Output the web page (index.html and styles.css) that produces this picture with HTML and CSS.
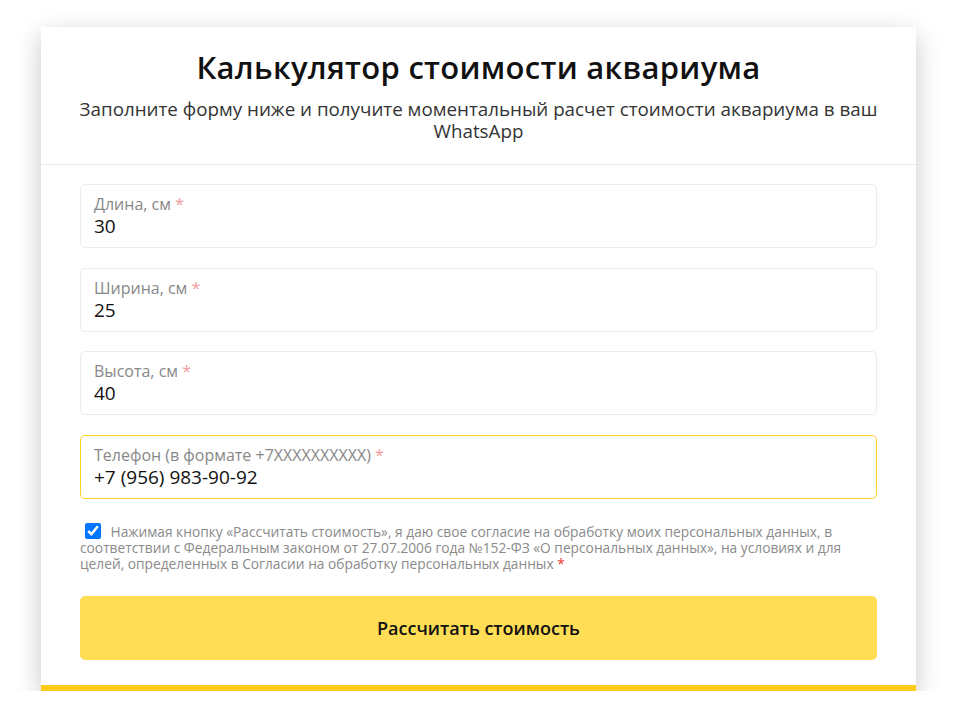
FILE: index.html
```html
<!DOCTYPE html>
<html lang="ru">

<head>
    <meta charset="UTF-8">
    <meta name="viewport" content="width=device-width, initial-scale=1.0">
    <title>Калькулятор стоимости аквариума</title>
    <link rel="stylesheet" href="styles.css">
</head>

<body>

    <div class="card">
        <!-- Шапка -->
        <div class="card-header">
            <h1>Калькулятор стоимости аквариума</h1>
            <p>Заполните форму ниже и получите моментальный расчет стоимости аквариума в ваш WhatsApp</p>
        </div>

        <!-- Форма -->
        <form class="card-body">
            <label class="field">
                <span class="field-label">Длина, см <span class="req">*</span></span>
                <input type="text" value="30">
            </label>

            <label class="field">
                <span class="field-label">Ширина, см <span class="req">*</span></span>
                <input type="text" value="25">
            </label>

            <label class="field">
                <span class="field-label">Высота, см <span class="req">*</span></span>
                <input type="text" value="40">
            </label>

            <label class="field field-active">
                <span class="field-label">Телефон (в формате +7XXXXXXXXXX) <span class="req">*</span></span>
                <input type="text" value="+7 (956) 983-90-92">
            </label>

            <div class="agree">
                <input type="checkbox" checked>
                Нажимая кнопку «Рассчитать стоимость», я даю свое согласие на обработку моих персональных данных, в
                соответствии с Федеральным законом от 27.07.2006 года №152-ФЗ «О персональных данных», на условиях и для
                целей, определенных в Согласии на обработку персональных данных <span class="req-strong">*</span>
            </div>

            <button type="button">Рассчитать стоимость</button>
        </form>
    </div>

</body>

</html>
```

FILE: styles.css
```css
body {
    margin: 0;
    padding-right: 2px;
    background: #fff;
    font-family: "Open Sans", Arial, sans-serif;
}

.card {
    width: 875px;
    margin: 27px auto 0;
    background: #fff;
    border-bottom: 6px solid #ffcc1c;
    box-shadow: 0 8px 24px rgba(0, 0, 0, 0.22);
}

.card-header {
    padding: 20px 30px 22px;
    text-align: center;
    border-bottom: 1px solid #e9e9e9;
}

.card-header h1 {
    margin: 0;
    font-size: 31px;
    line-height: 40px;
    font-weight: 600;
    color: #111;
    letter-spacing: 0.3px;
}

.card-header p {
    margin: 11px 0 0;
    font-size: 18.8px;
    line-height: 22px;
    color: #333;
}

.card-body {
    padding: 19px 39px 25px;
}

.field {
    display: block;
    margin-bottom: 19.7px;
    padding: 9px 13px;
    border: 1px solid #ececec;
    border-radius: 5px;
}

.field-active {
    border-color: #ffd21f;
}

.field-label {
    display: block;
    font-size: 16px;
    line-height: 20px;
    color: #888;
}

.req {
    color: #f29b9b;
}

.field input {
    display: block;
    width: 100%;
    padding: 0;
    border: none;
    outline: none;
    font-family: inherit;
    font-size: 19px;
    line-height: 24px;
    height: 24px;
    color: #111;
    background: transparent;
}

.agree {
    margin-top: 24px;
    font-size: 13.75px;
    line-height: 16px;
    color: #8a8a8a;
}

.agree input {
    width: 16px;
    height: 16px;
    margin: 0 6px 0 5px;
    vertical-align: -2px;
}

.req-strong {
    color: #e33;
}

button {
    display: block;
    width: 100%;
    height: 64px;
    margin-top: 24px;
    border: none;
    border-radius: 5px;
    background: #ffdd55;
    font-family: inherit;
    font-size: 18px;
    font-weight: 600;
    color: #111;
    cursor: pointer;
}
```
